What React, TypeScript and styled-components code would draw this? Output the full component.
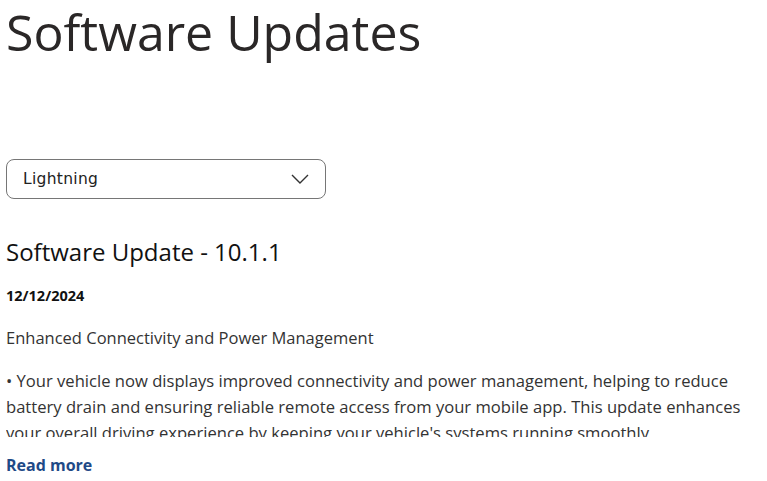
import React from "react";
import styled, { createGlobalStyle } from "styled-components";

const Global = createGlobalStyle`
  html, body { margin: 0; padding: 0; background: #ffffff; }
  body { font-family: "Open Sans", "DejaVu Sans", sans-serif; }
`;

const Page = styled.main`
  padding: 0 6px;
  display: flex;
  flex-direction: column;
`;

const Title = styled.h1`
  margin: 0;
  padding-top: 0;
  font-family: "Open Sans", sans-serif;
  font-weight: 400;
  font-size: 50px;
  line-height: 64px;
  color: #2a2727;
`;

const SelectBox = styled.button`
  margin-top: 95px;
  width: 320px;
  height: 40px;
  box-sizing: border-box;
  border: 1px solid #767676;
  border-radius: 8px;
  background: #fff;
  display: flex;
  align-items: center;
  justify-content: space-between;
  padding: 0 16px 0 16px;
  font-family: "DejaVu Sans", sans-serif;
  font-size: 15.5px;
  color: #222;
  letter-spacing: 0.3px;
`;

const Heading = styled.h2`
  margin: 37px 0 0;
  font-family: "Open Sans", sans-serif;
  font-weight: 400;
  font-size: 24px;
  line-height: 32px;
  color: #111;
`;

const DateText = styled.div`
  margin-top: 18px;
  font-family: "Open Sans", sans-serif;
  font-weight: 700;
  font-size: 14.5px;
  line-height: 20px;
  color: #111;
`;

const Subtitle = styled.p`
  margin: 20px 0 0;
  font-family: "Open Sans", sans-serif;
  font-size: 16.5px;
  line-height: 24px;
  color: #333;
`;

const Body = styled.p`
  margin: 18px 0 0;
  font-family: "Open Sans", sans-serif;
  font-size: 16.6px;
  line-height: 26px;
  color: #333;
  height: 69px;
  overflow: hidden;
`;

const ReadMore = styled.a`
  margin-top: 16px;
  font-family: "Open Sans", sans-serif;
  font-weight: 700;
  font-size: 16px;
  line-height: 24px;
  color: #1f4a87;
  text-decoration: none;
  align-self: flex-start;
`;

const Chevron = () => (
  <svg width="18" height="12" viewBox="0 0 18 12" fill="none">
    <path d="M1 2l8 8 8-8" stroke="#333" strokeWidth="1.4" />
  </svg>
);

export default function App() {
  return (
    <>
      <Global />
      <Page>
        <Title>Software Updates</Title>
        <SelectBox type="button">
          <span>Lightning</span>
          <Chevron />
        </SelectBox>
        <Heading>Software Update - 10.1.1</Heading>
        <DateText>12/12/2024</DateText>
        <Subtitle>Enhanced Connectivity and Power Management</Subtitle>
        <Body>
          • Your vehicle now displays improved connectivity and power management, helping to reduce
          battery drain and ensuring reliable remote access from your mobile app. This update enhances
          your overall driving experience by keeping your vehicle's systems running smoothly.
        </Body>
        <ReadMore href="#">Read more</ReadMore>
      </Page>
    </>
  );
}
